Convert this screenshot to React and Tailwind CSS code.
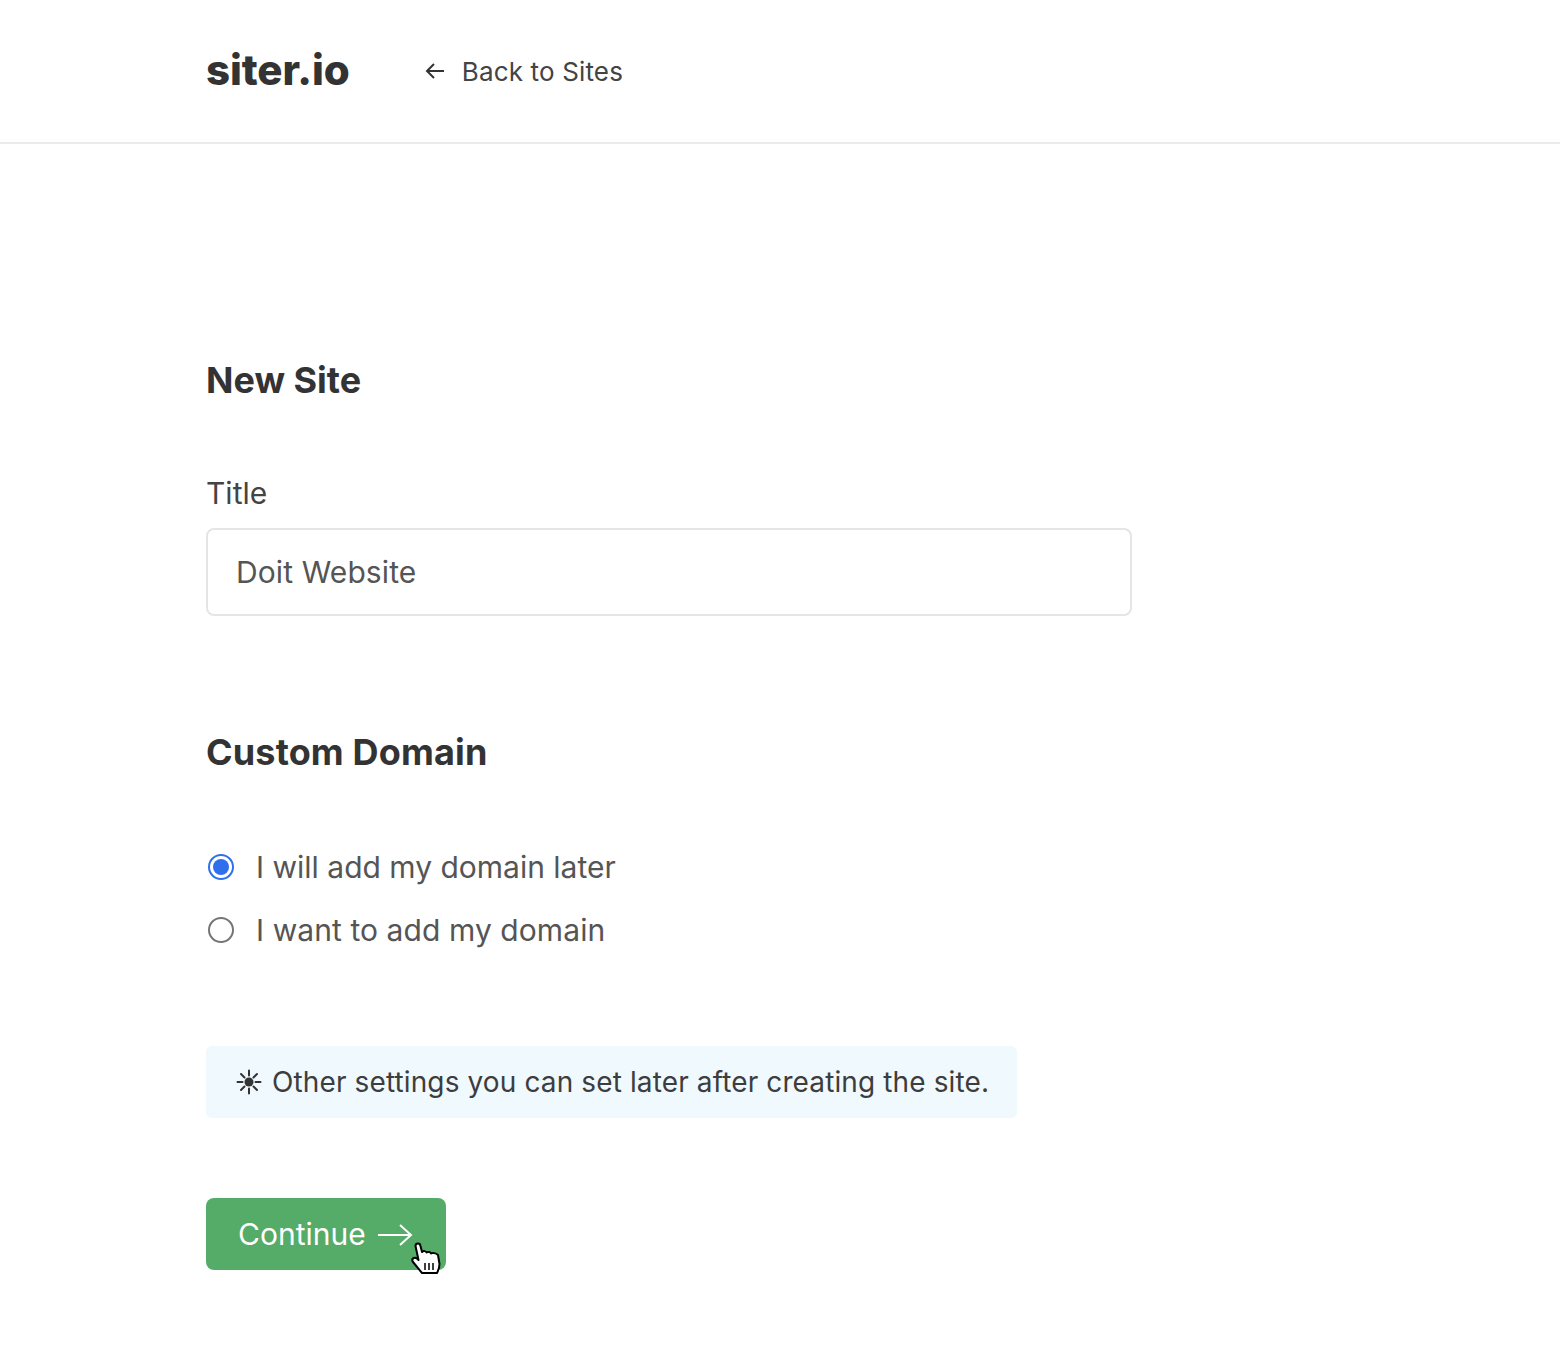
const App = () => {
  return (
    <div className="min-h-[1354px] bg-white font-['Inter',sans-serif] text-[#333]">
      <header className="h-[144px] border-b-2 border-[#ebebeb] pl-[206px] flex items-center">
        <div className="text-[42px] font-extrabold leading-none tracking-[-0.1px] text-[#333] mr-[74px] -mt-[2px]">siter.io</div>
        <a className="flex items-center text-[26px] tracking-[0.15px] text-[#444]">
          <svg width="22" height="22" viewBox="0 0 22 22" fill="none" stroke="#333" strokeWidth="2" className="mr-[16px]">
            <path d="M20 11H3M10 4l-7 7 7 7" />
          </svg>
          Back to Sites
        </a>
      </header>

      <main className="pl-[206px] w-[1132px] box-content">
        <h1 className="mt-[214px] text-[36px] font-bold leading-[44px] text-[#333]">New Site</h1>

        <label className="block mt-[73px] text-[30px] leading-[36px] text-[#444]">Title</label>
        <div className="mt-[17px] w-[926px] h-[88px] border-2 border-[#e5e5e5] rounded-lg px-[28px] flex items-center text-[30px] tracking-[0.1px] text-[#555]">
          Doit Website
        </div>

        <h2 className="mt-[114px] text-[36px] font-bold leading-[44px] tracking-[0.15px] text-[#333]">Custom Domain</h2>

        <div className="mt-[73px] flex items-center h-[40px] text-[30px] text-[#555]">
          <span className="w-[26px] h-[26px] ml-[2px] mr-[22px] rounded-full border-2 border-[#2f6fed] flex items-center justify-center">
            <span className="w-[16px] h-[16px] rounded-full bg-[#2f6fed]" />
          </span>
          I will add my domain later
        </div>
        <div className="mt-[23px] flex items-center h-[40px] text-[30px] tracking-[0.08px] text-[#555]">
          <span className="w-[26px] h-[26px] ml-[2px] mr-[22px] rounded-full border-2 border-[#757575]" />
          I want to add my domain
        </div>

        <div className="mt-[96px] w-[811px] h-[72px] bg-[#f0f9fd] rounded-md flex items-center pl-[30px] text-[28px] tracking-[0.12px] text-[#3d3d3d]">
          <svg width="26" height="26" viewBox="0 0 26 26" className="mr-[10px]" stroke="#333" strokeWidth="2" strokeLinecap="round">
            <circle cx="13" cy="13" r="4.500" fill="#333" stroke="none" />
            <path d="M13 1.500v5M13 19.500v5M1.500 13h5M19.500 13h5M5 5l3.500 3.500M17.500 17.500L21 21M5 21l3.500-3.500M17.500 8.500L21 5" />
          </svg>
          Other settings you can set later after creating the site.
        </div>

        <div className="relative mt-[80px] w-[240px]">
          <button className="w-[240px] h-[72px] bg-[#55ab68] rounded-lg flex items-center pl-[32px] text-[30px] text-white">
            Continue
            <svg width="36" height="22" viewBox="0 0 36 22" fill="none" stroke="white" strokeWidth="2" className="ml-[11px] mt-[1px]">
              <path d="M1 11h33M23 1l11 10-11 10" />
            </svg>
          </button>
          <svg width="30" height="32" viewBox="0 0 30 32" className="absolute left-[205px] top-[44px]">
            <path d="M4.500 4C4.500 1 9 .5 9.500 4L11 10c1.500-1.500 4-1 4.500.5 1.500-1 4-.5 4.500 1 1.500-1 5-.5 7 1.500l1.500 9c0 4-1.500 7-2.500 9H11L2 20c-2-3 1-5.500 4-3.500L7.500 18z" fill="white" stroke="black" strokeWidth="2" strokeLinejoin="round" />
            <path d="M14 21v7M18 21v7M22 21v7" stroke="black" strokeWidth="1.500" />
          </svg>
        </div>
      </main>
    </div>
  );
};

export default App;
